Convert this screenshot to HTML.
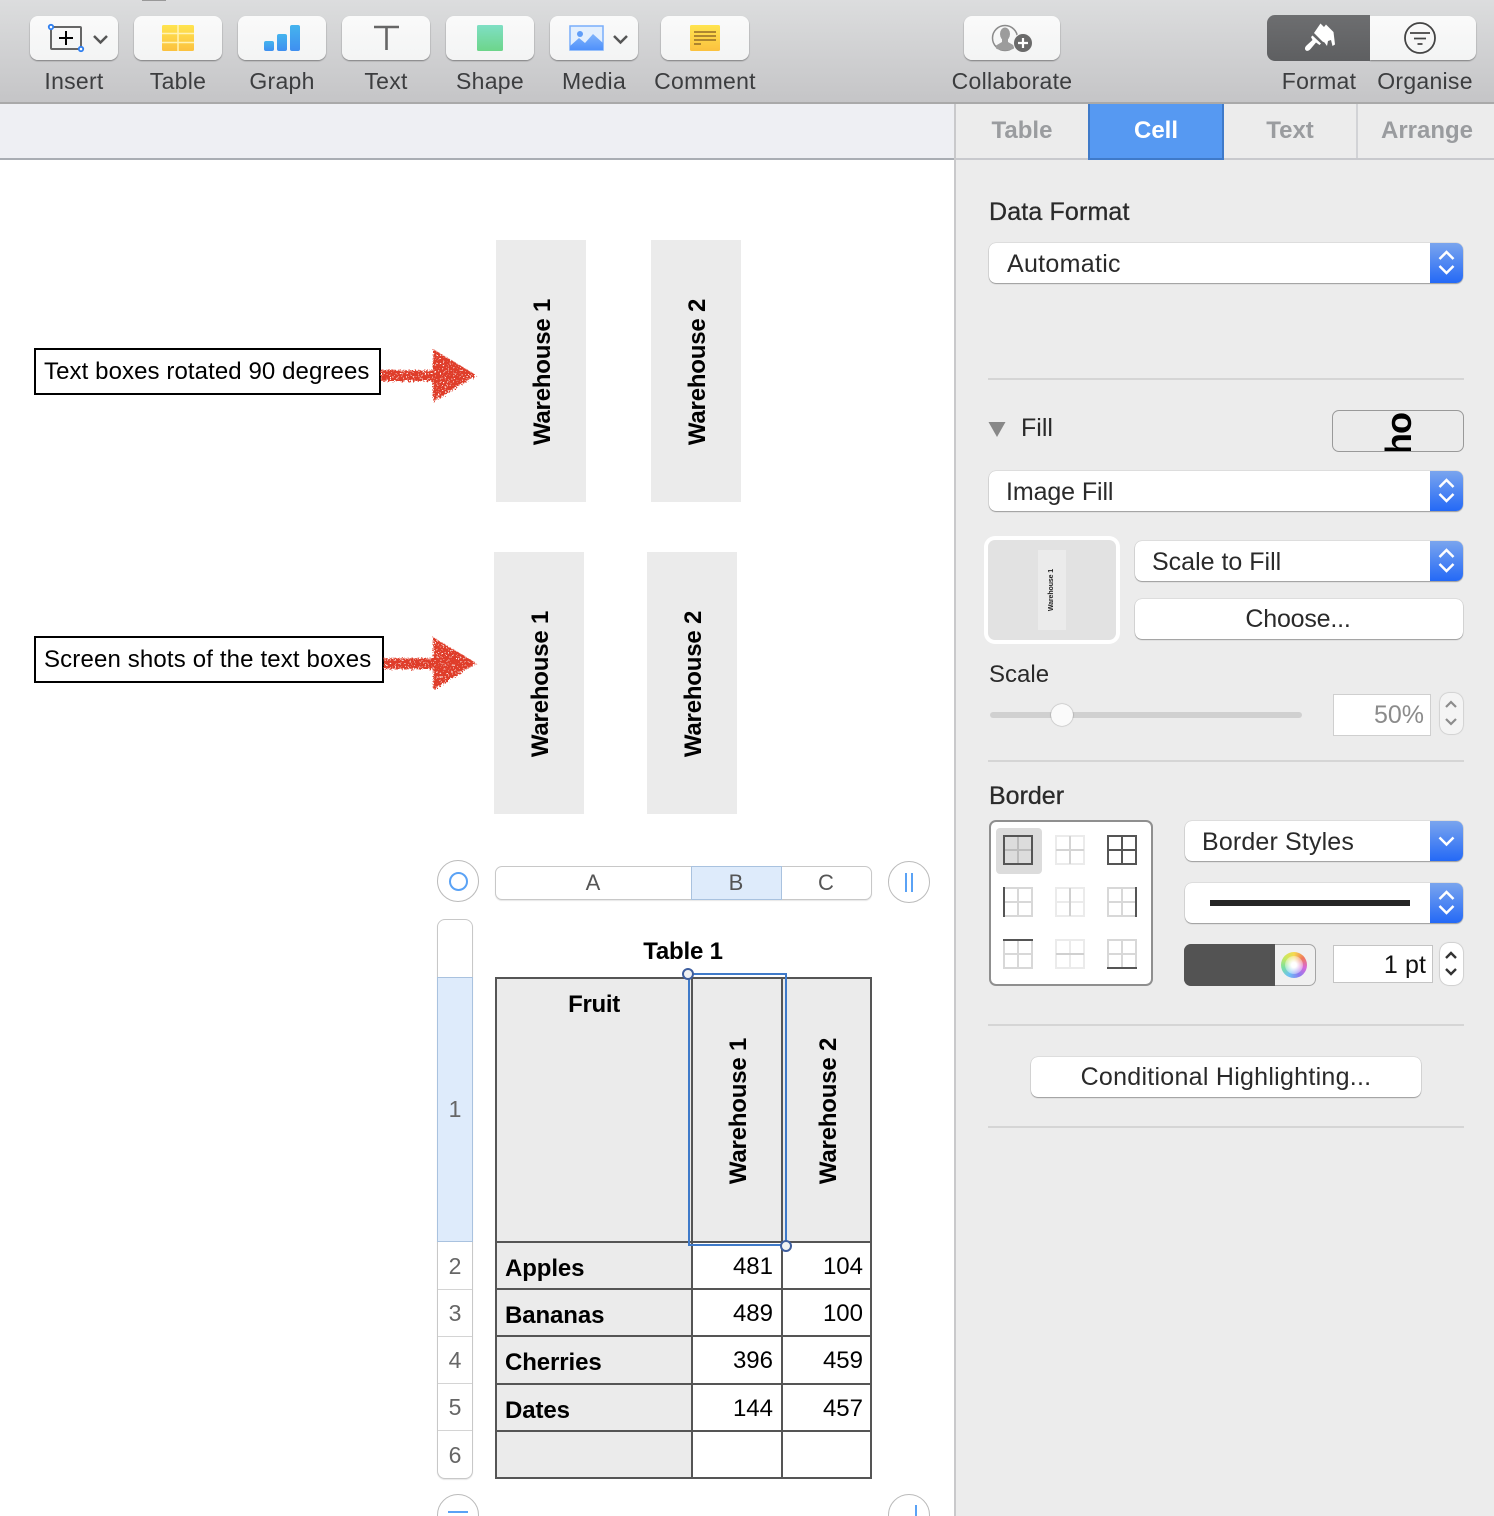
<!DOCTYPE html>
<html style="width:1494px;height:1516px;overflow:hidden"><head><meta charset="utf-8"><style>
html,body{margin:0;padding:0}
body{width:1494px;height:1516px;position:relative;overflow:hidden;background:#fff;font-family:"Liberation Sans",sans-serif}
div,svg{position:absolute;box-sizing:border-box}
.t{white-space:nowrap;line-height:30px;height:30px;margin-top:1px}
.c{text-align:center;transform:translateX(-50%)}
.tb{top:16px;height:44px;border-radius:8px;background:linear-gradient(#fafafa,#f3f4f4);box-shadow:0 1px 1.5px rgba(0,0,0,.4)}
.lb{top:65px;font-size:23px;letter-spacing:.28px;color:#3c3d3f}
.tab{top:115px;font-size:24px;font-weight:bold;color:#9a9c9f}
.h{font-size:25px;letter-spacing:.15px;color:#2a2a2a;margin-top:0}
.pop{background:#fff;border-radius:7px;box-shadow:0 0 1px rgba(0,0,0,.4),0 1px 1px rgba(0,0,0,.3);height:40px}
.st{right:0;top:0;width:33px;height:40px;border-radius:0 7px 7px 0;background:linear-gradient(#7aa5ee,#2469f6)}
.sep{left:988px;width:476px;height:2px;background:#d5d5d5}
.gb{background:#ebebeb;width:90px;height:262px}
.r{white-space:nowrap;font-weight:bold;font-size:24px;letter-spacing:-.2px;color:#000;line-height:30px;margin-left:2px;margin-top:1px;transform:translate(-50%,-50%) rotate(-90deg)}
.box{border:2px solid #000;background:#fff;height:47px;left:34px}
.bl{font-size:24px;font-weight:bold;letter-spacing:-.1px;color:#000;left:505px}
.n{font-size:24px;color:#000;text-align:right;width:60px}
.rn{font-size:23px;color:#666;left:437px;width:36px;text-align:center}
.rl{left:438px;width:34px;height:1px;background:#d4d4d4}
.tl{background:#555}
.ci{width:42px;height:42px;border-radius:50%;background:#fff;border:1.5px solid #bbb}
</style></head><body>

<!-- toolbar -->
<div style="left:0;top:0;width:1494px;height:104px;background:linear-gradient(#dcddde,#c5c5c7);border-bottom:2px solid #a9a9a9"></div>
<div style="left:142px;top:0;width:24px;height:1px;background:#999"></div>
<div style="left:0;top:104px;width:955px;height:54px;background:#eeeff3"></div>
<div style="left:0;top:158px;width:955px;height:2px;background:#a9adb3"></div>

<div class="tb" style="left:30px;width:88px"></div>
<div class="tb" style="left:134px;width:88px"></div>
<div class="tb" style="left:238px;width:88px"></div>
<div class="tb" style="left:342px;width:88px"></div>
<div class="tb" style="left:446px;width:88px"></div>
<div class="tb" style="left:550px;width:88px"></div>
<div class="tb" style="left:661px;width:88px"></div>
<div class="tb" style="left:964px;width:96px"></div>
<div class="tb" style="left:1370px;width:106px;border-radius:0 8px 8px 0"></div>
<div style="left:1267px;top:15px;width:103px;height:46px;background:linear-gradient(#6d6e70,#5e5f61);border-radius:8px 0 0 8px"></div>

<svg style="left:0;top:0" width="1494" height="104" viewBox="0 0 1494 104">
<defs>
<linearGradient id="y" x1="0" y1="0" x2="0" y2="1"><stop offset="0" stop-color="#ffe44f"/><stop offset="1" stop-color="#fbc13f"/></linearGradient>
<linearGradient id="b" x1="0" y1="0" x2="0" y2="1"><stop offset="0" stop-color="#45b4ee"/><stop offset="1" stop-color="#3f8ff0"/></linearGradient>
<linearGradient id="g" x1="0" y1="0" x2="0" y2="1"><stop offset="0" stop-color="#7fdfc4"/><stop offset="1" stop-color="#6dd58a"/></linearGradient>
<linearGradient id="m" x1="0" y1="0" x2="0" y2="1"><stop offset="0" stop-color="#7fb3fb"/><stop offset="1" stop-color="#4f91fb"/></linearGradient>
</defs>
<!-- insert -->
<rect x="51" y="27" width="30" height="22" rx="1" fill="none" stroke="#666" stroke-width="2"/>
<path d="M66 31v14M59 38h14" stroke="#000" stroke-width="2"/>
<circle cx="51" cy="27" r="2.200" fill="#fff" stroke="#2f7ff0" stroke-width="1.800"/>
<circle cx="81" cy="49" r="2.200" fill="#fff" stroke="#2f7ff0" stroke-width="1.800"/>
<path d="M94 36l6.500 6.500 6.500-6.500" fill="none" stroke="#555" stroke-width="2.500"/>
<!-- table -->
<rect x="162" y="25" width="32" height="26" rx="1.500" fill="url(#y)"/>
<path d="M178 25v26M162 33.500h32M162 42.500h32" stroke="#fff3b5" stroke-width="1.500"/>
<!-- graph -->
<rect x="264" y="41" width="10" height="10" rx="2" fill="url(#b)"/>
<rect x="277" y="34" width="10" height="17" rx="2" fill="url(#b)"/>
<rect x="290" y="25" width="10" height="26" rx="2" fill="url(#b)"/>
<!-- T -->
<path d="M374 27h25M386.500 27v23" stroke="#666" stroke-width="2.600" fill="none"/>
<!-- shape -->
<rect x="477" y="25" width="26" height="26" rx="1.500" fill="url(#g)"/>
<!-- media -->
<rect x="570" y="26" width="33" height="24" rx="1" fill="#e3effd"/>
<path d="M570 26h33v24h-33z" fill="none" stroke="#79aefb" stroke-width="1.500"/>
<path d="M570 46l9-8 6 5 8-9 10 9v7h-33z" fill="url(#m)"/>
<circle cx="580" cy="34" r="3" fill="#5f9df8"/>
<path d="M614 36l6.500 6.500 6.500-6.500" fill="none" stroke="#555" stroke-width="2.500"/>
<!-- comment -->
<rect x="690" y="25" width="30" height="26" rx="1.500" fill="url(#y)"/>
<path d="M694 32h22M694 36h22M694 40h22M694 44h7" stroke="#a27b2c" stroke-width="1.800"/>
<!-- collaborate -->
<circle cx="1005" cy="38" r="12.500" fill="none" stroke="#8b8b8b" stroke-width="1.500"/>
<ellipse cx="1005" cy="34" rx="5" ry="6.500" fill="#9c9c9c"/>
<path d="M1002 39h6v3l6 3.500v3c-5 2.500-13 2.500-18 0v-3l6-3.500z" fill="#9c9c9c"/>
<circle cx="1023" cy="43" r="9.500" fill="#6a6a6a" stroke="#f5f5f5" stroke-width="1"/>
<path d="M1023 38v10M1018 43h10" stroke="#fff" stroke-width="2.200"/>
<!-- brush -->
<path d="M1314 33l6.500-9.500 3.500 3.500 2-2.500 7.500 7.500 1.500 12.500-2.500 1.500-1.500-6-3 1-1 5-2.500-3.500-2-1z" fill="#fff"/>
<path d="M1312.500 35.500l8.500 8-1.500 1.500-3.500-2.500-5.500 6.500c-1.500 2-4 2.500-5 1s-.5-3 1-4.500l6-5.500-1.500-3z" fill="#fff"/>
<!-- organise -->
<circle cx="1420" cy="38" r="15" fill="none" stroke="#444" stroke-width="1.800"/>
<path d="M1410 33h20M1414 38.500h12M1417.500 44h5" stroke="#444" stroke-width="1.800"/>
</svg>

<div class="t lb c" style="left:74px">Insert</div>
<div class="t lb c" style="left:178px">Table</div>
<div class="t lb c" style="left:282px">Graph</div>
<div class="t lb c" style="left:386px">Text</div>
<div class="t lb c" style="left:490px">Shape</div>
<div class="t lb c" style="left:594px">Media</div>
<div class="t lb c" style="left:705px">Comment</div>
<div class="t lb c" style="left:1012px">Collaborate</div>
<div class="t lb c" style="left:1319px">Format</div>
<div class="t lb c" style="left:1425px">Organise</div>

<!-- inspector -->
<div style="left:954px;top:104px;width:540px;height:1412px;background:#ececec;border-left:2px solid #c9c9cb"></div>
<div style="left:956px;top:158px;width:538px;height:2px;background:#c8c9cd"></div>
<div style="left:1088px;top:104px;width:136px;height:56px;background:#5699f2;border:2px solid #3f7ac9;border-top:0"></div>
<div style="left:1356px;top:104px;width:2px;height:54px;background:#d2d3d6"></div>
<div class="t tab c" style="left:1022px">Table</div>
<div class="t tab c" style="left:1156px;color:#fff">Cell</div>
<div class="t tab c" style="left:1290px">Text</div>
<div class="t tab c" style="left:1427px">Arrange</div>

<div class="t h" style="left:989px;top:197px;-webkit-text-stroke:.3px #2a2a2a">Data Format</div>
<div class="pop" style="left:989px;top:243px;width:474px"><div class="st"></div></div>
<div class="t h" style="left:1007px;top:249px;letter-spacing:.3px">Automatic</div>
<div class="sep" style="top:378px"></div>

<svg style="left:988px;top:420px" width="18" height="18"><path d="M0.500 2h17l-8.500 15z" fill="#888"/></svg>
<div class="t h" style="left:1021px;top:413px;letter-spacing:0">Fill</div>
<div style="left:1332px;top:410px;width:132px;height:42px;background:#ebebeb;border:1px solid #999;border-radius:7px;overflow:hidden">
  <div class="r" style="left:65.500px;top:22.500px;font-size:36px;letter-spacing:-1px;line-height:36px;margin:0">ho</div>
</div>
<div class="pop" style="left:989px;top:471px;width:474px"><div class="st"></div></div>
<div class="t h" style="left:1006px;top:477px;letter-spacing:-.1px">Image Fill</div>

<div style="left:984px;top:536px;width:136px;height:108px;background:#fff;border-radius:11px"></div>
<div style="left:988px;top:540px;width:128px;height:100px;background:#e2e2e2;border-radius:7px"></div>
<div style="left:1038px;top:550px;width:28px;height:80px;background:#ebebeb"></div>
<div class="r" style="left:1050px;top:589px;font-size:7px;letter-spacing:-.1px;line-height:10px;color:#222">Warehouse 1</div>

<div class="pop" style="left:1135px;top:541px;width:328px"><div class="st"></div></div>
<div class="t h" style="left:1152px;top:547px;letter-spacing:0">Scale to Fill</div>
<div class="pop" style="left:1135px;top:599px;width:328px"></div>
<div class="t h c" style="left:1298px;top:604px;letter-spacing:-.2px">Choose...</div>
<div class="t h" style="left:989px;top:660px;font-size:24px;letter-spacing:0">Scale</div>
<div style="left:990px;top:712px;width:312px;height:6px;background:#d0d0d0;border-radius:3px"></div>
<div style="left:1051px;top:704px;width:22px;height:22px;border-radius:50%;background:#fafafa;box-shadow:0 0 1.500px rgba(0,0,0,.45)"></div>
<div style="left:1333px;top:694px;width:98px;height:42px;background:#fff;border:1px solid #cfcfcf"></div>
<div class="t h" style="right:70px;top:700px;color:#8b8b8b;letter-spacing:0">50%</div>
<div style="left:1440px;top:693px;width:23px;height:41px;background:#f4f4f4;border-radius:9px;box-shadow:0 0 1.500px rgba(0,0,0,.4)"></div>
<div class="sep" style="top:760px"></div>

<div class="t h" style="left:989px;top:781px;letter-spacing:0;-webkit-text-stroke:.3px #2a2a2a">Border</div>
<div style="left:989px;top:820px;width:164px;height:166px;background:#fff;border:2px solid #8f8f8f;border-radius:7px"></div>
<div style="left:996px;top:828px;width:46px;height:46px;background:#dcdcdc;border-radius:4px"></div>

<div class="pop" style="left:1185px;top:821px;width:278px"><div class="st"></div></div>
<div class="t h" style="left:1202px;top:827px">Border Styles</div>
<div class="pop" style="left:1185px;top:883px;width:278px"><div class="st"></div></div>
<div style="left:1210px;top:900px;width:200px;height:6px;background:#262626"></div>

<div style="left:1184px;top:944px;width:132px;height:42px;background:#f0f0f0;border:1px solid #a5a5a5;border-radius:7px"></div>
<div style="left:1184px;top:944px;width:91px;height:42px;background:#535353;border-radius:7px 0 0 7px"></div>
<div style="left:1281px;top:952px;width:26px;height:26px;border-radius:50%;background:conic-gradient(#f6d94f,#f07a5a,#d868d8,#8a7cf0,#6cc0f5,#7be0a0,#c8e860,#f6d94f)"></div>
<div style="left:1285px;top:956px;width:18px;height:18px;border-radius:50%;background:radial-gradient(#fff 20%,rgba(255,255,255,0) 100%)"></div>
<div style="left:1333px;top:945px;width:100px;height:38px;background:#fff;border:1px solid #c4c4c4"></div>
<div class="t h" style="right:68px;top:950px;color:#111;letter-spacing:.1px">1 pt</div>
<div style="left:1440px;top:943px;width:23px;height:42px;background:#fff;border-radius:9px;box-shadow:0 0 1.500px rgba(0,0,0,.45)"></div>

<svg style="left:0;top:0" width="1494" height="1100" viewBox="0 0 1494 1100">
<g fill="none" stroke="#fff" stroke-width="2.500">
<path d="M1439.500 259l7-7 7 7M1439.500 266l7 7 7-7"/>
<path d="M1439.500 487l7-7 7 7M1439.500 494l7 7 7-7"/>
<path d="M1439.500 557l7-7 7 7M1439.500 564l7 7 7-7"/>
<path d="M1439.500 837.500l7 7 7-7"/>
<path d="M1439.500 899l7-7 7 7M1439.500 906l7 7 7-7"/>
</g>
<g fill="none" stroke="#8c8c8c" stroke-width="2.200">
<path d="M1446 707l5-5 5 5M1446 719l5 5 5-5"/>
</g>
<g fill="none" stroke="#333" stroke-width="2.400">
<path d="M1446 958l5-5 5 5M1446 969l5 5 5-5"/>
</g>
<!-- border icons -->
<g fill="none" stroke-width="2">
<g stroke="#bcbcbc"><path d="M1018 836v28M1004 850h28"/></g>
<rect x="1004" y="836" width="28" height="28" stroke="#555"/>
<g stroke="#ebebeb"><rect x="1056" y="836" width="28" height="28"/></g>
<path d="M1070 836v28M1056 850h28" stroke="#d4d4d4"/>
<path d="M1122 836v28M1108 850h28" stroke="#555"/><rect x="1108" y="836" width="28" height="28" stroke="#555"/>

<rect x="1004" y="888" width="28" height="28" stroke="#d8d8d8"/><path d="M1018 888v28M1004 902h28" stroke="#d8d8d8"/><path d="M1004 887v30" stroke="#555"/>
<rect x="1056" y="888" width="28" height="28" stroke="#ebebeb"/><path d="M1056 902h28" stroke="#ebebeb"/><path d="M1070 888v28" stroke="#d0d0d0"/>
<rect x="1108" y="888" width="28" height="28" stroke="#d8d8d8"/><path d="M1122 888v28M1108 902h28" stroke="#d8d8d8"/><path d="M1136 887v30" stroke="#555"/>

<rect x="1004" y="940" width="28" height="28" stroke="#d8d8d8"/><path d="M1018 940v28M1004 954h28" stroke="#d8d8d8"/><path d="M1003 940h30" stroke="#555"/>
<rect x="1056" y="940" width="28" height="28" stroke="#ebebeb"/><path d="M1070 940v28" stroke="#ebebeb"/><path d="M1056 954h28" stroke="#d0d0d0"/>
<rect x="1108" y="940" width="28" height="28" stroke="#d8d8d8"/><path d="M1122 940v28M1108 954h28" stroke="#d8d8d8"/><path d="M1107 968h30" stroke="#555"/>
</g>
</svg>

<div class="sep" style="top:1024px"></div>
<div class="pop" style="left:1031px;top:1057px;width:390px"></div>
<div class="t h c" style="left:1226px;top:1062px;letter-spacing:.27px">Conditional Highlighting...</div>
<div class="sep" style="top:1126px"></div>

<!-- canvas boxes -->
<div class="gb" style="left:496px;top:240px"></div>
<div class="gb" style="left:651px;top:240px"></div>
<div class="gb" style="left:494px;top:552px"></div>
<div class="gb" style="left:647px;top:552px"></div>
<div class="r" style="left:541px;top:371px">Warehouse 1</div>
<div class="r" style="left:696px;top:371px">Warehouse 2</div>
<div class="r" style="left:539px;top:683px">Warehouse 1</div>
<div class="r" style="left:692px;top:683px">Warehouse 2</div>

<div class="box" style="top:348px;width:347px"></div>
<div class="t" style="left:44px;top:356px;font-size:24px;letter-spacing:.09px;color:#000">Text boxes rotated 90 degrees</div>
<div class="box" style="top:636px;width:350px"></div>
<div class="t" style="left:44px;top:644px;font-size:24px;letter-spacing:.15px;color:#000">Screen shots of the text boxes</div>

<svg style="left:0;top:0" width="500" height="720" viewBox="0 0 500 720">
<defs><filter id="rough" x="-10%" y="-30%" width="120%" height="160%">
<feTurbulence type="fractalNoise" baseFrequency="0.6" numOctaves="2" seed="4" result="n"/>
<feDisplacementMap in="SourceGraphic" in2="n" scale="7" result="d"/>
<feColorMatrix in="n" type="matrix" values="0 0 0 0 0 0 0 0 0 0 0 0 0 0 0 0 0 0 -12 8.500" result="h"/>
<feComposite in="d" in2="h" operator="in"/>
</filter></defs>
<g fill="#df3d2a" filter="url(#rough)">
<path d="M381 370h52v-21l43 26-43 27v-21h-52z"/>
<path d="M384 658h49v-21l43 26-43 27v-21h-49z"/>
</g>
</svg>

<!-- table controls -->
<div class="ci" style="left:437px;top:860px"></div>
<div style="left:449px;top:872px;width:19px;height:19px;border-radius:50%;border:2px solid #5aa2f5"></div>
<div class="ci" style="left:888px;top:861px"></div>
<div style="left:905px;top:873px;width:2px;height:19px;background:#5aa2f5"></div>
<div style="left:911px;top:873px;width:2px;height:19px;background:#5aa2f5"></div>

<div style="left:495px;top:866px;width:377px;height:34px;background:#fff;border:1px solid #c8c8c8;border-radius:7px;box-shadow:0 1px 1px rgba(0,0,0,.1)"></div>
<div style="left:691px;top:866px;width:91px;height:34px;background:#deebfb;border:1px solid #a9c2df"></div>
<div class="t c" style="left:593px;top:867px;font-size:22px;color:#555">A</div>
<div class="t c" style="left:736px;top:867px;font-size:22px;color:#555">B</div>
<div class="t c" style="left:826px;top:867px;font-size:22px;color:#555">C</div>

<div style="left:437px;top:919px;width:36px;height:560px;background:#fff;border:1px solid #c8c8c8;border-radius:8px;box-shadow:0 1px 1px rgba(0,0,0,.1)"></div>
<div style="left:437px;top:977px;width:36px;height:265px;background:#deebfb;border:1px solid #a9c2df"></div>
<div class="rl" style="top:1289px"></div>
<div class="rl" style="top:1336px"></div>
<div class="rl" style="top:1383px"></div>
<div class="rl" style="top:1430px"></div>
<div class="t rn" style="top:1093px">1</div>
<div class="t rn" style="top:1250px">2</div>
<div class="t rn" style="top:1297px">3</div>
<div class="t rn" style="top:1344px">4</div>
<div class="t rn" style="top:1391px">5</div>
<div class="t rn" style="top:1439px">6</div>

<div class="t c" style="left:683px;top:936px;font-size:24px;font-weight:bold;letter-spacing:-.2px;color:#000">Table 1</div>

<!-- table -->
<div style="left:495px;top:977px;width:377px;height:502px;background:#fff"></div>
<div style="left:495px;top:977px;width:197px;height:502px;background:#ebebeb"></div>
<div style="left:692px;top:977px;width:180px;height:265px;background:#ebebeb"></div>
<div class="tl" style="left:495px;top:977px;width:377px;height:2px"></div>
<div class="tl" style="left:495px;top:1241px;width:377px;height:2px"></div>
<div class="tl" style="left:495px;top:1288px;width:377px;height:2px"></div>
<div class="tl" style="left:495px;top:1335px;width:377px;height:2px"></div>
<div class="tl" style="left:495px;top:1383px;width:377px;height:2px"></div>
<div class="tl" style="left:495px;top:1430px;width:377px;height:2px"></div>
<div class="tl" style="left:495px;top:1477px;width:377px;height:2px"></div>
<div class="tl" style="left:495px;top:977px;width:2px;height:502px"></div>
<div class="tl" style="left:691px;top:977px;width:2px;height:502px"></div>
<div class="tl" style="left:781px;top:977px;width:2px;height:502px"></div>
<div class="tl" style="left:870px;top:977px;width:2px;height:502px"></div>

<div class="t c" style="left:594px;top:989px;font-size:24px;font-weight:bold;letter-spacing:-.3px;color:#000">Fruit</div>
<div class="r" style="left:737px;top:1110px">Warehouse 1</div>
<div class="r" style="left:827px;top:1110px">Warehouse 2</div>
<div class="t bl" style="top:1253px">Apples</div>
<div class="t bl" style="top:1300px">Bananas</div>
<div class="t bl" style="top:1347px">Cherries</div>
<div class="t bl" style="top:1395px">Dates</div>
<div class="t n" style="left:713px;top:1251px">481</div>
<div class="t n" style="left:803px;top:1251px">104</div>
<div class="t n" style="left:713px;top:1298px">489</div>
<div class="t n" style="left:803px;top:1298px">100</div>
<div class="t n" style="left:713px;top:1345px">396</div>
<div class="t n" style="left:803px;top:1345px">459</div>
<div class="t n" style="left:713px;top:1393px">144</div>
<div class="t n" style="left:803px;top:1393px">457</div>

<div style="left:688px;top:973px;width:99px;height:273px;border:2px solid #3f7ac9"></div>
<div style="left:682px;top:968px;width:12px;height:12px;border-radius:50%;background:#f2f2f2;border:2px solid #3f5f9f"></div>
<div style="left:780px;top:1240px;width:12px;height:12px;border-radius:50%;background:#f2f2f2;border:2px solid #3f5f9f"></div>

<div class="ci" style="left:437px;top:1494px"></div>
<div style="left:448px;top:1511px;width:20px;height:2px;background:#5aa2f5"></div>
<div class="ci" style="left:888px;top:1494px"></div>
<div style="left:915px;top:1505px;width:2px;height:11px;background:#5aa2f5"></div>

</body></html>
